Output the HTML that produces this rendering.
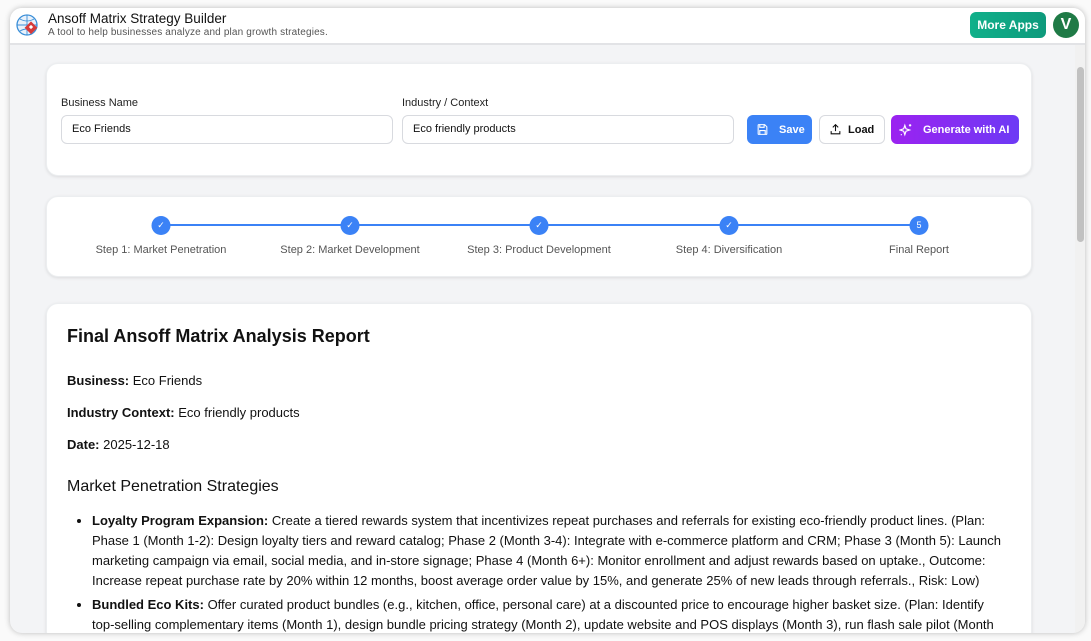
<!DOCTYPE html>
<html><head><style>
*{box-sizing:border-box;margin:0;padding:0}
body{width:1091px;height:641px;background:#fafafa;font-family:"Liberation Sans",Arial,sans-serif;position:relative;overflow:hidden;color:#111}
.win{position:absolute;left:10px;top:8px;width:1075px;height:625px;border-radius:12px;background:#f3f4f6;overflow:hidden;box-shadow:0 0 6px rgba(0,0,0,.25)}
.hdr{position:absolute;left:0;top:0;width:100%;height:37px;background:#fff;border-bottom:2px solid #e2e3e6}
.title{position:absolute;left:38px;top:3px;font-size:13.5px;color:#111}
.sub{position:absolute;left:38px;top:19px;font-size:10px;color:#555;letter-spacing:.15px}
.more{position:absolute;left:960px;top:4px;width:76px;height:26px;border-radius:6px;background:linear-gradient(90deg,#10b08a,#0e9a7c);color:#fff;font-size:12px;font-weight:bold;text-align:center;line-height:26px}
.av{position:absolute;left:1043px;top:4px;width:26px;height:26px;border-radius:50%;background:#1f7a46;color:#fff;font-weight:bold;font-size:16px;text-align:center;line-height:26px}
.sb{position:absolute;left:1065px;top:37px;width:10px;height:600px;background:#f1f1f1}
.sb div{position:absolute;left:2px;top:22px;width:7px;height:175px;background:#c1c1c1;border-radius:4px}
.card{position:absolute;left:36px;width:986px;background:#fff;border-radius:12px;box-shadow:0 1px 3px rgba(0,0,0,.1);border:1px solid #eceef0;overflow:hidden}
.lbl{position:absolute;font-size:11px;color:#222;top:33px}
.inp{position:absolute;top:51px;height:29px;border:1px solid #d8dadf;border-radius:6px;font-size:11px;padding-left:10px;line-height:27px}
.btn{position:absolute;top:51px;height:29px;border-radius:6px;font-size:11px;font-weight:bold;display:flex;align-items:center}
.step{position:absolute;top:47px;font-size:11px;color:#555;transform:translateX(-50%);white-space:nowrap}
.dot{position:absolute;top:19px;width:19px;height:19px;border-radius:50%;background:#3b82f6;transform:translateX(-50%);color:#fff;font-size:9px;text-align:center;line-height:19px}
.line{position:absolute;top:27px;height:2px;background:#3b82f6}
.rep{padding:22px 26px 22px 20px;font-size:13px;line-height:20px}
.rep h1{font-size:18px;margin-bottom:25px;margin-top:0}
.rep p{margin-bottom:12px}
.rep h2{font-size:16px;font-weight:normal;margin:22px 0 14px}
.rep ul{padding-left:25px}
.rep li{margin-bottom:4px}
</style></head><body>
<div class="win">
<div class="hdr">
<svg style="position:absolute;left:6px;top:6px" width="24" height="24" viewBox="0 0 24 24"><circle cx="11" cy="11" r="10" fill="#e8f1fb" stroke="#3b8fd8" stroke-width="1.3"/><path d="M1 11h20M11 1v20M4 5q7 4 14 0M4 17q7-4 14 0" stroke="#3b8fd8" fill="none" stroke-width=".9"/><rect x="11" y="9" width="9" height="9" transform="rotate(45 15 13)" fill="#d63a3a"/><rect x="13.5" y="11.5" width="3" height="3" fill="#fff" transform="rotate(45 15 13)"/></svg>
<div class="title">Ansoff Matrix Strategy Builder</div>
<div class="sub">A tool to help businesses analyze and plan growth strategies.</div>
<div class="more">More Apps</div><div class="av">V</div>
</div>
<div class="sb"><div></div></div>
<div class="card" style="top:55px;height:113px">
<div class="lbl" style="left:14px">Business Name</div>
<div class="inp" style="left:14px;width:332px">Eco Friends</div>
<div class="lbl" style="left:355px">Industry / Context</div>
<div class="inp" style="left:355px;width:332px">Eco friendly products</div>
<div class="btn" style="left:700px;width:65px;background:#3b82f6;color:#fff;padding-left:32px"><svg style="position:absolute;left:9px;top:8px" width="13" height="13" viewBox="0 0 24 24" fill="none" stroke="#fff" stroke-width="2"><path d="M5 3h11l4 4v13a1 1 0 0 1-1 1H5a1 1 0 0 1-1-1V4a1 1 0 0 1 1-1z M7 3v5h8V3 M7 21v-7h10v7"/></svg>Save</div>
<div class="btn" style="left:772px;width:66px;border:1px solid #d8dadf;color:#111;padding-left:28px"><svg style="position:absolute;left:9px;top:7px" width="13" height="13" viewBox="0 0 24 24" fill="none" stroke="#111" stroke-width="2"><path d="M12 15V3M7 8l5-5 5 5M4 15v5h16v-5"/></svg>Load</div>
<div class="btn" style="left:844px;width:128px;background:linear-gradient(90deg,#9b22f0,#6d3af5);color:#fff;padding-left:32px"><svg style="position:absolute;left:8px;top:8px" width="14" height="14" viewBox="0 0 24 24" fill="none" stroke="#fff" stroke-width="2"><path d="M10 4l2 6 6 2-6 2-2 6-2-6-6-2 6-2z M19 2v4M17 4h4 M4 19v2"/></svg>Generate with AI</div>
</div>
<div class="card" style="top:188px;height:81px">
<div class="line" style="left:114px;width:759px"></div>
<div class="dot" style="left:114px">✓</div><div class="dot" style="left:303px">✓</div><div class="dot" style="left:492px">✓</div><div class="dot" style="left:682px">✓</div><div class="dot" style="left:872px">5</div>
<div class="step" style="left:114px">Step 1: Market Penetration</div>
<div class="step" style="left:303px">Step 2: Market Development</div>
<div class="step" style="left:492px">Step 3: Product Development</div>
<div class="step" style="left:682px">Step 4: Diversification</div>
<div class="step" style="left:872px">Final Report</div>
</div>
<div class="card" style="top:295px;height:340px">
<div class="rep">
<h1>Final Ansoff Matrix Analysis Report</h1>
<p><b>Business:</b> Eco Friends</p>
<p><b>Industry Context:</b> Eco friendly products</p>
<p><b>Date:</b> 2025-12-18</p>
<h2>Market Penetration Strategies</h2>
<ul>
<li><b>Loyalty Program Expansion:</b> Create a tiered rewards system that incentivizes repeat purchases and referrals for existing eco-friendly product lines. (Plan: Phase 1 (Month 1-2): Design loyalty tiers and reward catalog; Phase 2 (Month 3-4): Integrate with e-commerce platform and CRM; Phase 3 (Month 5): Launch marketing campaign via email, social media, and in-store signage; Phase 4 (Month 6+): Monitor enrollment and adjust rewards based on uptake., Outcome: Increase repeat purchase rate by 20% within 12 months, boost average order value by 15%, and generate 25% of new leads through referrals., Risk: Low)</li>
<li><b>Bundled Eco Kits:</b> Offer curated product bundles (e.g., kitchen, office, personal care) at a discounted price to encourage higher basket size. (Plan: Identify top-selling complementary items (Month 1), design bundle pricing strategy (Month 2), update website and POS displays (Month 3), run flash sale pilot (Month 4))</li>
</ul>
</div>
</div>
</div>
</body></html>
